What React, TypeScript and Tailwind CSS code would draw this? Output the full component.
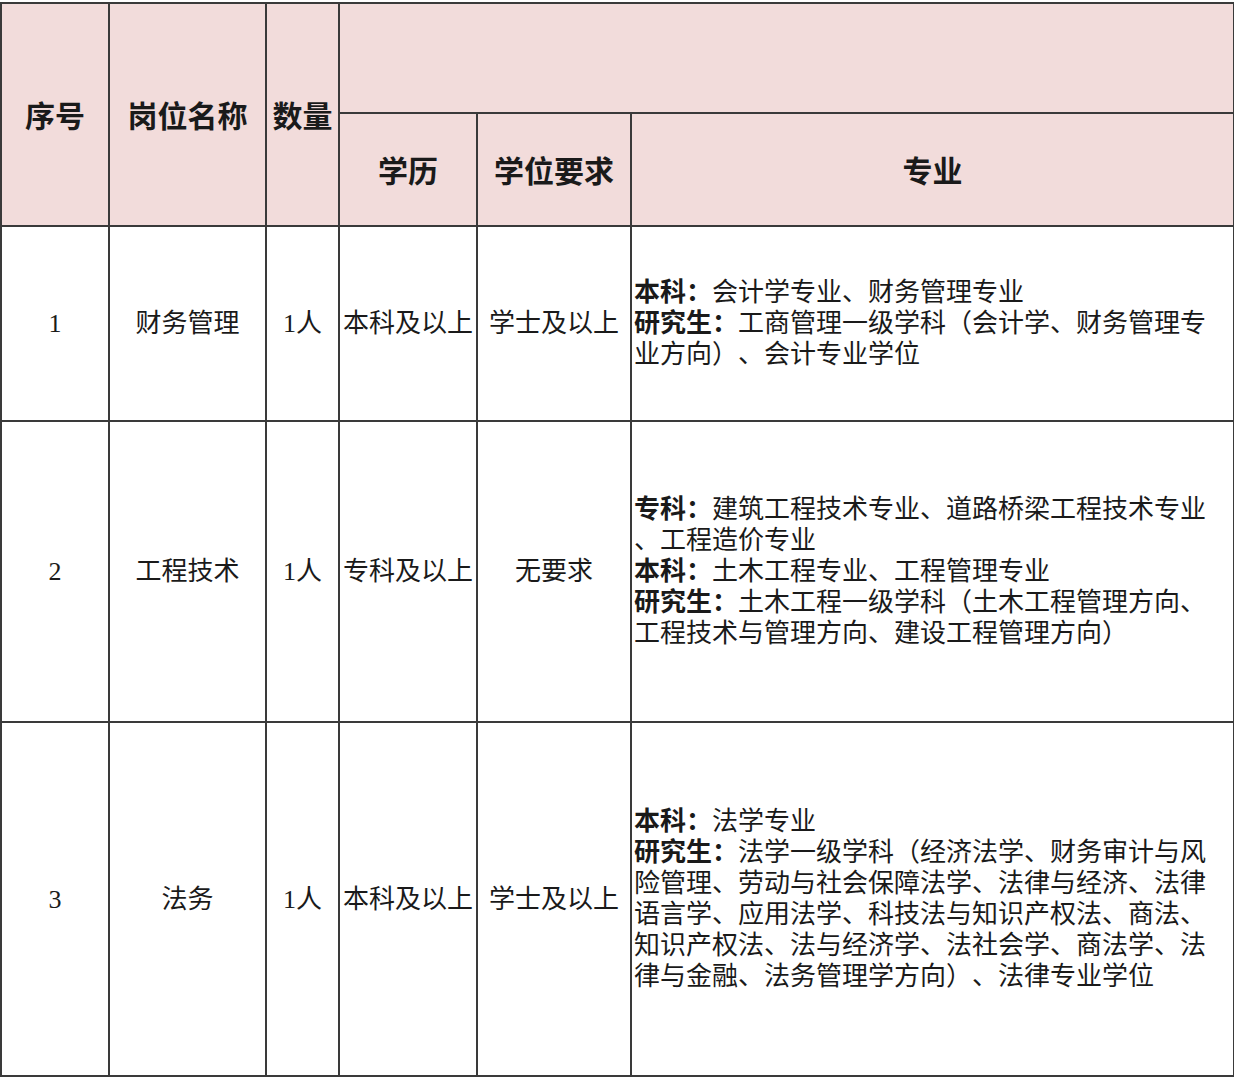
const body = '"Liberation Serif", "Noto Sans CJK SC", serif';

type Row = {
  no: string;
  name: string;
  count: string;
  edu: string;
  degree: string;
  height: string;
  lines: { label?: string; text: string }[];
};

const rows: Row[] = [
  {
    no: "1",
    name: "财务管理",
    count: "1人",
    edu: "本科及以上",
    degree: "学士及以上",
    height: "h-[195px]",
    lines: [
      { label: "本科：", text: "会计学专业、财务管理专业" },
      { label: "研究生：", text: "工商管理一级学科（会计学、财务管理专" },
      { text: "业方向）、会计专业学位" },
    ],
  },
  {
    no: "2",
    name: "工程技术",
    count: "1人",
    edu: "专科及以上",
    degree: "无要求",
    height: "h-[301px]",
    lines: [
      { label: "专科：", text: "建筑工程技术专业、道路桥梁工程技术专业" },
      { text: "、工程造价专业" },
      { label: "本科：", text: "土木工程专业、工程管理专业" },
      { label: "研究生：", text: "土木工程一级学科（土木工程管理方向、" },
      { text: "工程技术与管理方向、建设工程管理方向）" },
    ],
  },
  {
    no: "3",
    name: "法务",
    count: "1人",
    edu: "本科及以上",
    degree: "学士及以上",
    height: "h-[354px]",
    lines: [
      { label: "本科：", text: "法学专业" },
      { label: "研究生：", text: "法学一级学科（经济法学、财务审计与风" },
      { text: "险管理、劳动与社会保障法学、法律与经济、法律" },
      { text: "语言学、应用法学、科技法与知识产权法、商法、" },
      { text: "知识产权法、法与经济学、法社会学、商法学、法" },
      { text: "律与金融、法务管理学方向）、法律专业学位" },
    ],
  },
];

const cell = "border-2 border-[#3a3a3a]";
const head = `${cell} bg-[#f2dcdb] text-center align-middle text-[30px] font-bold text-[#1a1a1a]`;
const td = `${cell} text-center align-middle text-[26px] text-[#1a1a1a] p-0`;

export default function App() {
  return (
    <div className="w-[1234px] h-[1080px] bg-white pt-[2px] [text-spacing-trim:space-all]" style={{ fontFamily: body }}>
      <table className="table-fixed border-collapse w-[1233px]" style={{ fontFamily: '"Noto Sans CJK SC", sans-serif' }}>
        <colgroup>
          <col className="w-[108px]" />
          <col className="w-[157px]" />
          <col className="w-[73px]" />
          <col className="w-[138px]" />
          <col className="w-[154px]" />
          <col className="w-[603px]" />
        </colgroup>
        <thead>
          <tr>
            <th rowSpan={2} className={head}>序号</th>
            <th rowSpan={2} className={head}>岗位名称</th>
            <th rowSpan={2} className={head}>数量</th>
            <th colSpan={3} className={`${head} h-[110px]`}></th>
          </tr>
          <tr>
            <th className={`${head} h-[113px]`}>学历</th>
            <th className={head}>学位要求</th>
            <th className={head}>专业</th>
          </tr>
        </thead>
        <tbody style={{ fontFamily: body }}>
          {rows.map((r) => (
            <tr key={r.no}>
              <td className={`${td} ${r.height}`}>{r.no}</td>
              <td className={td}>{r.name}</td>
              <td className={`${td} text-[25px]`}>{r.count}</td>
              <td className={`${td} whitespace-nowrap`}>{r.edu}</td>
              <td className={`${td} whitespace-nowrap`}>{r.degree}</td>
              <td className={`${cell} align-middle pl-[2px] text-left text-[26px] leading-[31px] text-[#1a1a1a]`}>
                {r.lines.map((l, i) => (
                  <div key={i} className="whitespace-nowrap">
                    {l.label ? <span className="font-bold">{l.label}</span> : null}
                    {l.text}
                  </div>
                ))}
              </td>
            </tr>
          ))}
        </tbody>
      </table>
    </div>
  );
}
